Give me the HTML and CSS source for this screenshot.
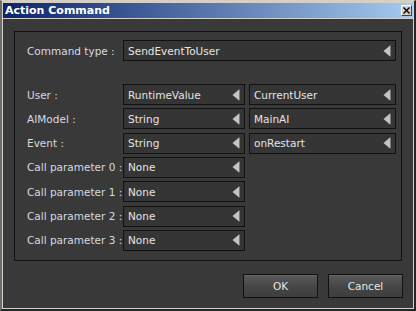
FILE: index.html
```html
<!DOCTYPE html>
<html>
<head>
<meta charset="utf-8">
<link rel="stylesheet" href="styles.css">
</head>
<body>
<div class="window">
  <div class="inner">
    <div class="titlebar">
      <span class="title">Action Command</span>
      <span class="close"><svg width="7" height="7" viewBox="0 0 7 7"><path d="M0.5 0.5 L6.5 6.5 M6.5 0.5 L0.5 6.5" stroke="#000" stroke-width="1.4" fill="none"/></svg></span>
    </div>
    <div class="body">
      <div class="group">
        <div class="cmd-row">
          <span class="label">Command type :</span>
          <div class="select wide"><span>SendEventToUser</span><svg class="arrow" width="8" height="12" viewBox="0 0 8 12"><polygon points="7,0.5 7,11.5 0.5,6" fill="#c4c4c4"/><line x1="7.5" y1="0.5" x2="7.5" y2="11.5" stroke="#777" stroke-width="1"/></svg></div>
        </div>
        <div class="grid">
          <span class="label">User :</span>
          <div class="select"><span>RuntimeValue</span><svg class="arrow" width="8" height="12" viewBox="0 0 8 12"><polygon points="7,0.5 7,11.5 0.5,6" fill="#c4c4c4"/><line x1="7.5" y1="0.5" x2="7.5" y2="11.5" stroke="#777" stroke-width="1"/></svg></div>
          <div class="select"><span>CurrentUser</span><svg class="arrow" width="8" height="12" viewBox="0 0 8 12"><polygon points="7,0.5 7,11.5 0.5,6" fill="#c4c4c4"/><line x1="7.5" y1="0.5" x2="7.5" y2="11.5" stroke="#777" stroke-width="1"/></svg></div>

          <span class="label">AIModel :</span>
          <div class="select"><span>String</span><svg class="arrow" width="8" height="12" viewBox="0 0 8 12"><polygon points="7,0.5 7,11.5 0.5,6" fill="#c4c4c4"/><line x1="7.5" y1="0.5" x2="7.5" y2="11.5" stroke="#777" stroke-width="1"/></svg></div>
          <div class="select"><span>MainAI</span><svg class="arrow" width="8" height="12" viewBox="0 0 8 12"><polygon points="7,0.5 7,11.5 0.5,6" fill="#c4c4c4"/><line x1="7.5" y1="0.5" x2="7.5" y2="11.5" stroke="#777" stroke-width="1"/></svg></div>

          <span class="label">Event :</span>
          <div class="select"><span>String</span><svg class="arrow" width="8" height="12" viewBox="0 0 8 12"><polygon points="7,0.5 7,11.5 0.5,6" fill="#c4c4c4"/><line x1="7.5" y1="0.5" x2="7.5" y2="11.5" stroke="#777" stroke-width="1"/></svg></div>
          <div class="select"><span>onRestart</span><svg class="arrow" width="8" height="12" viewBox="0 0 8 12"><polygon points="7,0.5 7,11.5 0.5,6" fill="#c4c4c4"/><line x1="7.5" y1="0.5" x2="7.5" y2="11.5" stroke="#777" stroke-width="1"/></svg></div>

          <span class="label">Call parameter 0 :</span>
          <div class="select"><span>None</span><svg class="arrow" width="8" height="12" viewBox="0 0 8 12"><polygon points="7,0.5 7,11.5 0.5,6" fill="#c4c4c4"/><line x1="7.5" y1="0.5" x2="7.5" y2="11.5" stroke="#777" stroke-width="1"/></svg></div>
          <span class="empty"></span>

          <span class="label">Call parameter 1 :</span>
          <div class="select"><span>None</span><svg class="arrow" width="8" height="12" viewBox="0 0 8 12"><polygon points="7,0.5 7,11.5 0.5,6" fill="#c4c4c4"/><line x1="7.5" y1="0.5" x2="7.5" y2="11.5" stroke="#777" stroke-width="1"/></svg></div>
          <span class="empty"></span>

          <span class="label">Call parameter 2 :</span>
          <div class="select"><span>None</span><svg class="arrow" width="8" height="12" viewBox="0 0 8 12"><polygon points="7,0.5 7,11.5 0.5,6" fill="#c4c4c4"/><line x1="7.5" y1="0.5" x2="7.5" y2="11.5" stroke="#777" stroke-width="1"/></svg></div>
          <span class="empty"></span>

          <span class="label">Call parameter 3 :</span>
          <div class="select"><span>None</span><svg class="arrow" width="8" height="12" viewBox="0 0 8 12"><polygon points="7,0.5 7,11.5 0.5,6" fill="#c4c4c4"/><line x1="7.5" y1="0.5" x2="7.5" y2="11.5" stroke="#777" stroke-width="1"/></svg></div>
          <span class="empty"></span>
        </div>
      </div>
      <div class="buttons">
        <button class="btn">OK</button>
        <button class="btn">Cancel</button>
      </div>
    </div>
  </div>
</div>
</body>
</html>
```

FILE: styles.css
```css
* { box-sizing: border-box; }
html, body { margin: 0; padding: 0; }
body {
  width: 416px;
  height: 311px;
  overflow: hidden;
  background: #2a2a2a;
  font-family: "DejaVu Sans", sans-serif;
  font-size: 10.5px;
}
.window {
  width: 416px;
  height: 311px;
  border-top: 1px solid #d4d0c8;
  border-left: 2px solid #6e6e6e;
  border-right: 2px solid #262626;
  border-bottom: 2px solid #262626;
}
.inner {
  height: 100%;
  border: 1px solid #d4d0c8;
  border-top-width: 2px;
  display: flex;
  flex-direction: column;
}
.titlebar {
  height: 16px;
  flex: none;
  border-bottom: 1px solid #d4d0c8;
  background: linear-gradient(to right, #0a246a, #a6caf0);
  display: flex;
  align-items: center;
  justify-content: space-between;
  padding: 0 1px 0 2px;
}
.title {
  color: #fff;
  font-weight: bold;
  font-size: 11px;
  line-height: 15px;
}
.close {
  width: 11px;
  height: 11px;
  background: #d4d0c8;
  border: 1px solid;
  border-color: #fff #404040 #404040 #fff;
  display: flex;
  align-items: center;
  justify-content: center;
}
.close svg { display: block; }
.body {
  flex: 1;
  background: #393939;
  padding: 12px 10px 0 11px;
}
.group {
  width: 388px;
  height: 230px;
  border: 1px solid #111;
  padding: 8px 0 0 12px;
}
.cmd-row {
  display: flex;
  align-items: center;
  height: 21px;
}
.cmd-row .label { width: 96px; }
.label {
  color: #d6dae0;
  white-space: nowrap;
}
.select {
  height: 21px;
  border: 1px solid #111;
  background: #353535;
  color: #e4e4e4;
  display: flex;
  align-items: center;
  justify-content: space-between;
  padding: 0 4px 0 4px;
  white-space: nowrap;
}
.select.wide { width: 273px; }
.arrow { display: block; flex: none; }
.grid {
  margin-top: 23px;
  display: grid;
  grid-template-columns: 92px 122px 147px;
  column-gap: 4px;
  grid-auto-rows: 21px;
  row-gap: 3.33px;
  align-items: center;
}
.buttons {
  margin-top: 13px;
  display: flex;
  justify-content: flex-end;
  gap: 10px;
}
.btn {
  width: 75px;
  height: 24px;
  border: 1px solid #111;
  background: linear-gradient(to bottom, #5a5a5a, #444 60%, #3e3e3e);
  box-shadow: inset 0 1px 0 #666;
  color: #e6e6e6;
  font-family: "DejaVu Sans", sans-serif;
  font-size: 10.5px;
  padding: 0;
}
```
